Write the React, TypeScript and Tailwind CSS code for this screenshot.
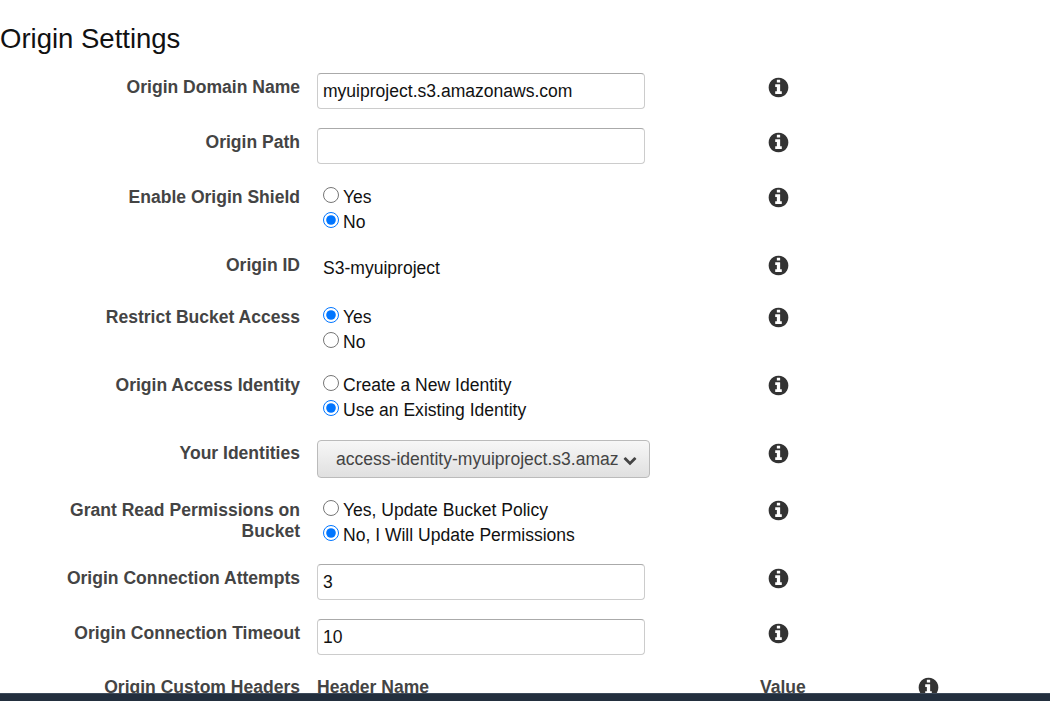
import React from "react";

function Label({ children }: { children: React.ReactNode }) {
  return (
    <div className="w-[300px] shrink-0 pt-[3px] text-right text-[17.55px] leading-[21px] font-bold text-[#444444]">
      {children}
    </div>
  );
}

function Info({ left = "ml-[122px]" }: { left?: string }) {
  return (
    <div className={`pt-[2px] text-[#333333] ${left}`}>
      <svg width="23" height="23" viewBox="0 0 1792 1792" fill="currentColor" fillRule="evenodd">
        <path d="M1152 1376v-160q0-14-9-23t-23-9h-96v-512q0-14-9-23t-23-9h-320q-14 0-23 9t-9 23v160q0 14 9 23t23 9h96v320h-96q-14 0-23 9t-9 23v160q0 14 9 23t23 9h448q14 0 23-9t9-23zm-128-896v-160q0-14-9-23t-23-9h-192q-14 0-23 9t-9 23v160q0 14 9 23t23 9h192q14 0 23-9t9-23zm640 416q0 209-103 385.5t-279.5 279.5-385.5 103-385.5-103-279.5-279.5-103-385.5 103-385.5 279.5-279.5 385.5-103 385.5 103 279.5 279.5 103 385.5z" />
      </svg>
    </div>
  );
}

function Field({ value }: { value: string }) {
  return (
    <input
      readOnly
      value={value}
      className="-mt-[1px] ml-[17px] h-[36px] w-[328px] shrink-0 rounded-[4px] border border-[#cccccc] border-t-[#aaaaaa] bg-white px-[5px] text-[17.55px] text-[#111111] outline-none"
    />
  );
}

function Radios({ options, picked, name }: { options: string[]; picked: number; name: string }) {
  return (
    <div className="ml-[23px] flex w-[322px] shrink-0 flex-col text-[17.55px] text-[#111111]">
      {options.map((o, i) => (
        <label key={o} className="flex h-[25px] items-center">
          <input type="radio" name={name} readOnly checked={i === picked} className="m-0 mr-[4px] mb-[4px] h-4 w-4" />
          <span className="mt-[2px]">{o}</span>
        </label>
      ))}
    </div>
  );
}

export default function App() {
  return (
    <div className="flex h-[701px] w-[1050px] flex-col overflow-hidden bg-white font-['Liberation_Sans',Arial,sans-serif]">
      <div className="flex-1 overflow-hidden">
        <h2 className="mt-[23px] h-[51px] text-[27.5px] leading-[32px] font-normal text-[#111111]">Origin Settings</h2>

        <div className="flex h-[55px]">
          <Label>Origin Domain Name</Label>
          <Field value="myuiproject.s3.amazonaws.com" />
          <Info />
        </div>
        <div className="flex h-[55px]">
          <Label>Origin Path</Label>
          <Field value="" />
          <Info />
        </div>
        <div className="flex h-[68px]">
          <Label>Enable Origin Shield</Label>
          <Radios name="shield" options={["Yes", "No"]} picked={1} />
          <Info />
        </div>
        <div className="flex h-[52px]">
          <Label>Origin ID</Label>
          <div className="ml-[23px] w-[322px] shrink-0 pt-[6px] text-[17.55px] leading-[21px] text-[#111111]">S3-myuiproject</div>
          <Info />
        </div>
        <div className="flex h-[68px]">
          <Label>Restrict Bucket Access</Label>
          <Radios name="restrict" options={["Yes", "No"]} picked={0} />
          <Info />
        </div>
        <div className="flex h-[68px]">
          <Label>Origin Access Identity</Label>
          <Radios name="identity" options={["Create a New Identity", "Use an Existing Identity"]} picked={1} />
          <Info />
        </div>
        <div className="flex h-[57px]">
          <Label>Your Identities</Label>
          <div className="ml-[17px] flex h-[38px] w-[333px] shrink-0 items-center justify-between rounded-[4px] border border-[#bbbbbb] bg-gradient-to-b from-[#f7f7f7] to-[#e0e0e0] pr-[12px] pl-[18px] text-[17.55px] text-[#444444]">
            <span className="whitespace-nowrap">access-identity-myuiproject.s3.amaz</span>
            <svg width="14" height="14" viewBox="0 0 1792 1792" fill="currentColor" className="mt-[2px] shrink-0 text-[#444444]">
              <path d="M1683 808l-742 741q-19 19-45 19t-45-19l-742-741q-19-19-19-45.5t19-45.5l166-165q19-19 45-19t45 19l531 531 531-531q19-19 45-19t45 19l166 165q19 19 19 45.5t-19 45.5z" />
            </svg>
          </div>
          <Info left="ml-[117px]" />
        </div>
        <div className="flex h-[68px]">
          <Label>
            Grant Read Permissions on
            <br />
            Bucket
          </Label>
          <Radios name="grant" options={["Yes, Update Bucket Policy", "No, I Will Update Permissions"]} picked={1} />
          <Info />
        </div>
        <div className="flex h-[55px]">
          <Label>Origin Connection Attempts</Label>
          <Field value="3" />
          <Info />
        </div>
        <div className="flex h-[54px]">
          <Label>Origin Connection Timeout</Label>
          <Field value="10" />
          <Info />
        </div>
        <div className="flex h-[40px]">
          <Label>Origin Custom Headers</Label>
          <div className="ml-[17px] w-[443px] shrink-0 pt-[3px] text-[17.55px] leading-[21px] font-bold text-[#444444]">Header Name</div>
          <div className="w-[157px] shrink-0 pt-[3px] text-[17.55px] leading-[21px] font-bold text-[#444444]">Value</div>
          <Info left="ml-0" />
        </div>
      </div>
      <div className="h-[8px] shrink-0 border-t border-t-[#3d4a5a] bg-[#232f3e]" />
    </div>
  );
}
